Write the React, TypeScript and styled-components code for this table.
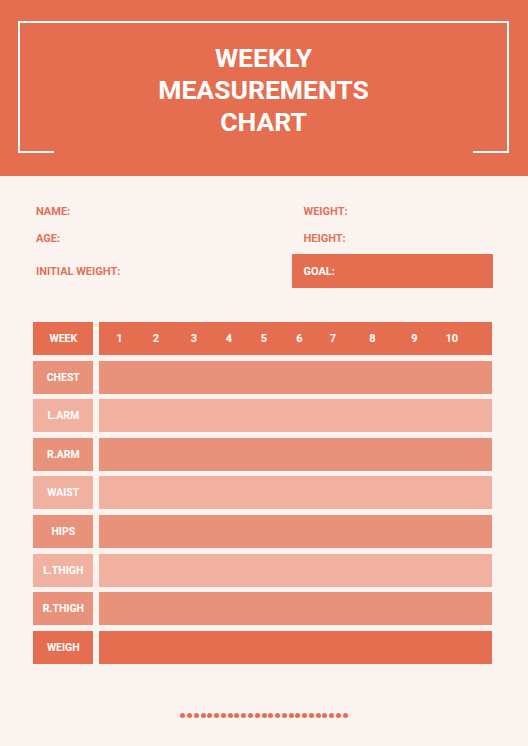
import { Fragment } from "react";
import styled, { createGlobalStyle } from "styled-components";

const ORANGE = "#e56e50";
const MID = "#e8917b";
const LIGHT = "#f1b1a0";
const PAPER = "#faf3f0";

const GlobalStyle = createGlobalStyle`
  html, body {
    margin: 0;
    padding: 0;
    background: ${PAPER};
  }
  body {
    font-family: Roboto, "Liberation Sans", Arial, sans-serif;
  }
`;

const Page = styled.div`
  width: 528px;
  height: 746px;
  background: ${PAPER};
  overflow: hidden;
`;

const Header = styled.header`
  height: 176px;
  background: ${ORANGE};
  padding: 21px 19px 0 18px;
  box-sizing: border-box;
`;

const Frame = styled.div`
  position: relative;
  height: 132px;
  border: 2px solid #fff;
  border-bottom: none;
  box-sizing: border-box;
  padding-top: 19px;

  &::before,
  &::after {
    content: "";
    position: absolute;
    bottom: 0;
    width: 36px;
    height: 2px;
    background: #fff;
  }
  &::before {
    left: -2px;
  }
  &::after {
    right: -2px;
  }
`;

const Title = styled.h1`
  margin: 0;
  color: #fff;
  font-size: 26.5px;
  line-height: 32px;
  font-weight: 700;
  text-align: center;
`;

const Info = styled.section`
  display: grid;
  grid-template-columns: 256px 201px;
  grid-template-rows: 27px 27px 36.5px;
  margin: 21.5px 0 0 36px;
`;

const Field = styled.div<{ $right?: boolean; $goal?: boolean; $tall?: boolean }>`
  display: flex;
  align-items: center;
  height: ${(p) => (p.$tall ? "34px" : "27px")};
  padding-left: ${(p) => (p.$right ? "11.5px" : "0")};
  margin-top: ${(p) => (p.$tall ? "2.5px" : "0")};
  background: ${(p) => (p.$goal ? ORANGE : "transparent")};
  color: ${(p) => (p.$goal ? "#fff" : "#e07257")};
  font-size: 11px;
  font-weight: 700;
`;

const Table = styled.section`
  display: grid;
  grid-template-columns: 60px 393px;
  grid-auto-rows: 33px;
  column-gap: 6px;
  row-gap: 5.6px;
  margin: 34px 0 0 33.3px;
`;

type Tone = "dark" | "mid" | "light";

const toneColor = (t: Tone) => (t === "dark" ? ORANGE : t === "mid" ? MID : LIGHT);

const Label = styled.div<{ $tone: Tone }>`
  display: flex;
  align-items: center;
  justify-content: center;
  background: ${(p) => toneColor(p.$tone)};
  color: #fff;
  font-size: 10.5px;
  font-weight: 700;
`;

const Cells = styled.div<{ $tone: Tone }>`
  background: ${(p) => toneColor(p.$tone)};
`;

const Weeks = styled.div`
  display: grid;
  grid-template-columns: 40px 33px 43px 27px 43px 28px 39px 40px 44px 31px;
  align-items: center;
  background: ${ORANGE};
  color: #fff;
  font-size: 11px;
  font-weight: 700;

  span {
    text-align: center;
  }
`;

const Dots = styled.div`
  display: flex;
  justify-content: center;
  gap: 1.78px;
  margin-top: 49.5px;
`;

const Dot = styled.span`
  width: 5px;
  height: 5px;
  border-radius: 50%;
  background: ${ORANGE};
`;

const rows: { name: string; tone: Tone }[] = [
  { name: "CHEST", tone: "mid" },
  { name: "L.ARM", tone: "light" },
  { name: "R.ARM", tone: "mid" },
  { name: "WAIST", tone: "light" },
  { name: "HIPS", tone: "mid" },
  { name: "L.THIGH", tone: "light" },
  { name: "R.THIGH", tone: "mid" },
  { name: "WEIGH", tone: "dark" },
];

export default function App() {
  return (
    <Page>
      <GlobalStyle />
      <Header>
        <Frame>
          <Title>
            WEEKLY
            <br />
            MEASUREMENTS
            <br />
            CHART
          </Title>
        </Frame>
      </Header>

      <Info>
        <Field>NAME:</Field>
        <Field $right>WEIGHT:</Field>
        <Field>AGE:</Field>
        <Field $right>HEIGHT:</Field>
        <Field $tall>INITIAL WEIGHT:</Field>
        <Field $right $goal $tall>
          GOAL:
        </Field>
      </Info>

      <Table>
        <Label $tone="dark">WEEK</Label>
        <Weeks>
          {Array.from({ length: 10 }, (_, i) => (
            <span key={i}>{i + 1}</span>
          ))}
        </Weeks>
        {rows.map((r) => (
          <Fragment key={r.name}>
            <Label $tone={r.tone}>{r.name}</Label>
            <Cells $tone={r.tone} />
          </Fragment>
        ))}
      </Table>

      <Dots>
        {Array.from({ length: 25 }, (_, i) => (
          <Dot key={i} />
        ))}
      </Dots>
    </Page>
  );
}
